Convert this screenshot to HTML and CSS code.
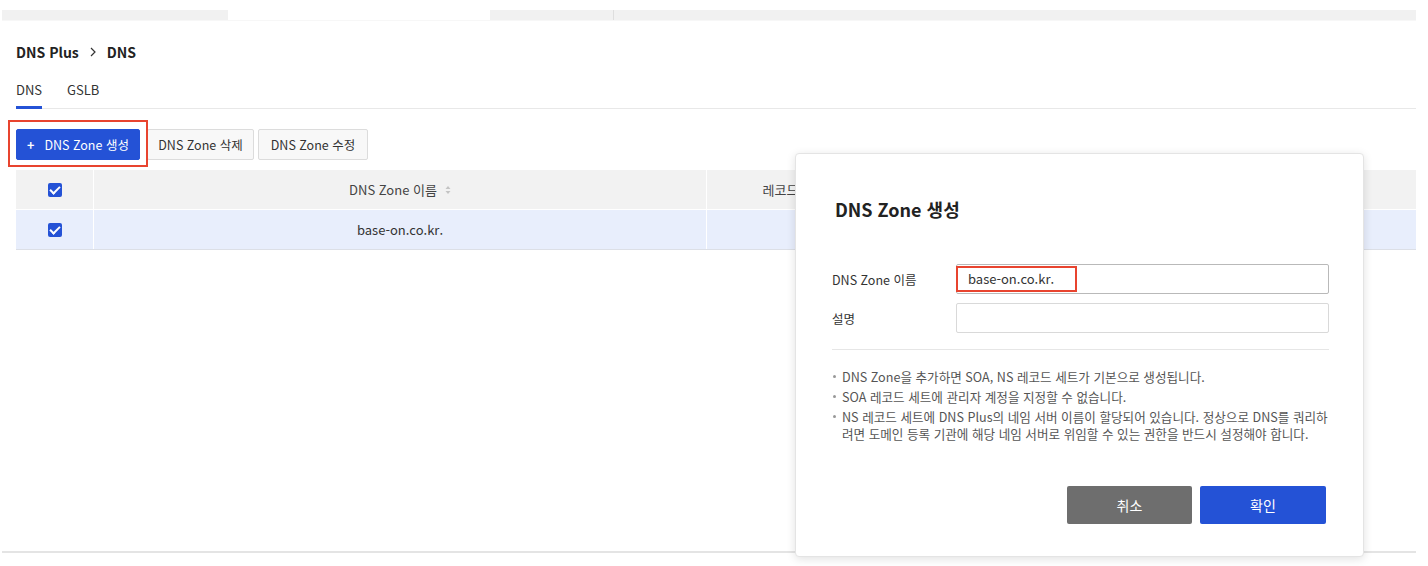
FILE: index.html
```html
<!DOCTYPE html>
<html lang="ko">
<head>
    <meta charset="UTF-8">
    <title>DNS Plus - DNS</title>
    <link rel="stylesheet" href="styles.css">
</head>
<body>
    <div class="topbar">
        <div class="seg seg-a"></div>
        <div class="seg seg-gap"></div>
        <div class="seg seg-b"></div>
        <div class="seg seg-c"></div>
    </div>

    <div class="breadcrumb">
        <span>DNS Plus</span>
        <svg class="crumb-arrow" width="8" height="10" viewBox="0 0 8 10"><path d="M2 1l4 4-4 4" fill="none" stroke="#333" stroke-width="1.2"/></svg>
        <span>DNS</span>
    </div>

    <div class="tabs">
        <div class="tab active">DNS</div>
        <div class="tab">GSLB</div>
    </div>

    <div class="toolbar">
        <button class="btn btn-primary highlight"><span class="plus">+</span>DNS Zone 생성</button>
        <button class="btn btn-default btn-del">DNS Zone 삭제</button>
        <button class="btn btn-default btn-edit">DNS Zone 수정</button>
    </div>

    <div class="grid">
        <div class="grid-row grid-head">
            <div class="cell cell-check"><span class="checkbox"></span></div>
            <div class="cell cell-name">DNS Zone 이름
                <svg class="sort" width="6" height="10" viewBox="0 0 6 10"><path d="M3 1L5.5 4H.5zM3 9L.5 6h5z" fill="#c4c4c4"/></svg>
            </div>
            <div class="cell cell-rec">레코드 세트 수</div>
            <div class="cell cell-rest">설명</div>
        </div>
        <div class="grid-row grid-body">
            <div class="cell cell-check"><span class="checkbox"></span></div>
            <div class="cell cell-name">base-on.co.kr.</div>
            <div class="cell cell-rec">2</div>
            <div class="cell cell-rest"></div>
        </div>
    </div>

    <div class="footer-line"></div>

    <!-- DNS Zone 생성 modal -->
    <div class="modal">
        <h2 class="modal-title">DNS Zone 생성</h2>
        <div class="form-row">
            <label>DNS Zone 이름</label>
            <div class="input"><span class="mark">base-on.co.kr.</span></div>
        </div>
        <div class="form-row">
            <label>설명</label>
            <div class="input"></div>
        </div>
        <hr class="divider">
        <ul class="notes">
            <li>DNS Zone을 추가하면 SOA, NS 레코드 세트가 기본으로 생성됩니다.</li>
            <li>SOA 레코드 세트에 관리자 계정을 지정할 수 없습니다.</li>
            <li>NS 레코드 세트에 DNS Plus의 네임 서버 이름이 할당되어 있습니다. 정상으로 DNS를 쿼리하<br>려면 도메인 등록 기관에 해당 네임 서버로 위임할 수 있는 권한을 반드시 설정해야 합니다.</li>
        </ul>
        <div class="modal-actions">
            <button class="mbtn mbtn-cancel">취소</button>
            <button class="mbtn mbtn-ok">확인</button>
        </div>
    </div>
</body>
</html>
```

FILE: styles.css
```css
body {
    margin: 0;
    font-family: 'Noto Sans CJK KR', 'Noto Sans', sans-serif;
    color: #333;
    background: #fff;
    position: relative;
    height: 566px;
    overflow: hidden;
}
.topbar {
    display: flex;
    margin: 10px 0 0 2px;
    width: 1414px;
    height: 10px;
    border-bottom: 1px solid #f7f7f7;
}
.seg {
    height: 10px;
    background: #f1f1f1;
}
.seg-a { width: 226px; }
.seg-gap { width: 262px; background: #fff; }
.seg-b { width: 123px; border-right: 1px solid #dedede; }
.seg-c { flex: 1; }

.breadcrumb {
    margin-top: 21px;
    padding-left: 16px;
    height: 20px;
    line-height: 20px;
    font-size: 14px;
    font-weight: 700;
    color: #222;
    display: flex;
    align-items: center;
}
.crumb-arrow {
    margin: 0 10px 0 10px;
}

.tabs {
    display: flex;
    margin: 18px 12px 0 16px;
    border-bottom: 1px solid #e8e8e8;
}
.tab {
    font-size: 13px;
    line-height: 20px;
    padding-bottom: 6px;
    margin-right: 25px;
    border-bottom: 3px solid transparent;
    margin-bottom: -1px;
    color: #333;
}
.tab.active {
    border-bottom-color: #2452d6;
}

.toolbar {
    display: flex;
    margin: 20px 0 0 16px;
    height: 31px;
}
.btn {
    font-family: inherit;
    font-size: 12.5px;
    height: 31px;
    padding: 0;
    border-radius: 2px;
    cursor: pointer;
    white-space: nowrap;
    margin-right: 4px;
}
.btn-primary {
    background: #2452d6;
    border: 1px solid #2452d6;
    color: #fff;
    width: 124px;
    margin-right: 7px;
}
.plus {
    font-weight: 700;
    margin-right: 10px;
}
.highlight {
    position: relative;
}
.highlight::after {
    content: '';
    position: absolute;
    left: -9px;
    right: -9px;
    top: -10px;
    bottom: -8px;
    border: 2px solid #e8442f;
}
.btn-default {
    background: #f8f8f8;
    border: 1px solid #dcdcdc;
    color: #333;
}
.btn-del { width: 107px; }
.btn-edit { width: 110px; }

.grid {
    margin: 10px 12px 0 16px;
}
.grid-row {
    display: flex;
}
.grid-head {
    height: 39px;
    background: #f2f2f2;
    border-bottom: 1px solid #fff;
    color: #444;
}
.grid-body {
    height: 39px;
    background: #e8eefc;
    border-bottom: 1px solid #dcdfe6;
    color: #333;
}
.cell {
    display: flex;
    align-items: center;
    justify-content: center;
    font-size: 13px;
    border-right: 1px solid #fff;
}
.cell-check { width: 77px; }
.cell-name { width: 612px; }
.cell-rec { width: 190px; }
.cell-rest { flex: 1; border-right: none; }
.sort {
    margin-left: 8px;
}
.checkbox {
    width: 14px;
    height: 14px;
    border-radius: 2px;
    background: #2452d6;
    position: relative;
}
.checkbox::after {
    content: '';
    position: absolute;
    left: 4px;
    top: 1px;
    width: 4px;
    height: 8px;
    border: solid #fff;
    border-width: 0 2px 2px 0;
    transform: rotate(45deg);
}

.footer-line {
    margin: 301px 12px 0 2px;
    height: 2px;
    background: #e4e4e4;
}

.modal {
    position: absolute;
    left: 795px;
    top: 153px;
    width: 569px;
    height: 404px;
    box-sizing: border-box;
    background: #fff;
    border-radius: 4px;
    border: 1px solid #e4e4e4;
    box-shadow: 0 2px 10px rgba(0, 0, 0, 0.12);
    padding: 0 34px 0 36px;
}
.modal-title {
    margin: 43px 0 0 3px;
    font-size: 18px;
    font-weight: 700;
    line-height: 24px;
    color: #222;
}
.form-row {
    display: flex;
    align-items: center;
    margin-top: 9px;
}
.modal-title + .form-row {
    margin-top: 43px;
}
.form-row label {
    width: 124px;
    font-size: 12.5px;
    color: #333;
}
.input {
    flex: 1;
    height: 28px;
    border: 1px solid #d9d9d9;
    border-radius: 2px;
    display: flex;
    align-items: center;
    font-size: 13px;
    color: #333;
}
.form-row:first-of-type .input {
    border-color: #b9b9b9;
}
.mark {
    border: 2px solid #e8442f;
    height: 22px;
    line-height: 22px;
    width: 107px;
    padding-left: 10px;
    margin-left: -1px;
}
.divider {
    border: none;
    border-top: 1px solid #e6e6e6;
    margin: 16px 0 0 0;
}
.notes {
    list-style: none;
    margin: 18px 0 0 0;
    padding: 0;
    font-size: 12.6px;
    line-height: 17px;
    color: #555;
}
.notes li {
    position: relative;
    padding-left: 10px;
    margin-bottom: 3px;
}
.notes li::before {
    content: '';
    position: absolute;
    left: 1px;
    top: 7px;
    width: 3px;
    height: 3px;
    border-radius: 50%;
    background: #999;
}
.modal-actions {
    display: flex;
    justify-content: flex-end;
    margin-top: 44px;
    padding-right: 3px;
}
.mbtn {
    font-family: inherit;
    font-size: 14px;
    height: 38px;
    width: 125px;
    border: none;
    border-radius: 2px;
    color: #fff;
    cursor: pointer;
}
.mbtn-cancel {
    background: #6e6e6e;
    margin-right: 8px;
}
.mbtn-ok {
    background: #2452d6;
    width: 126px;
}
```
